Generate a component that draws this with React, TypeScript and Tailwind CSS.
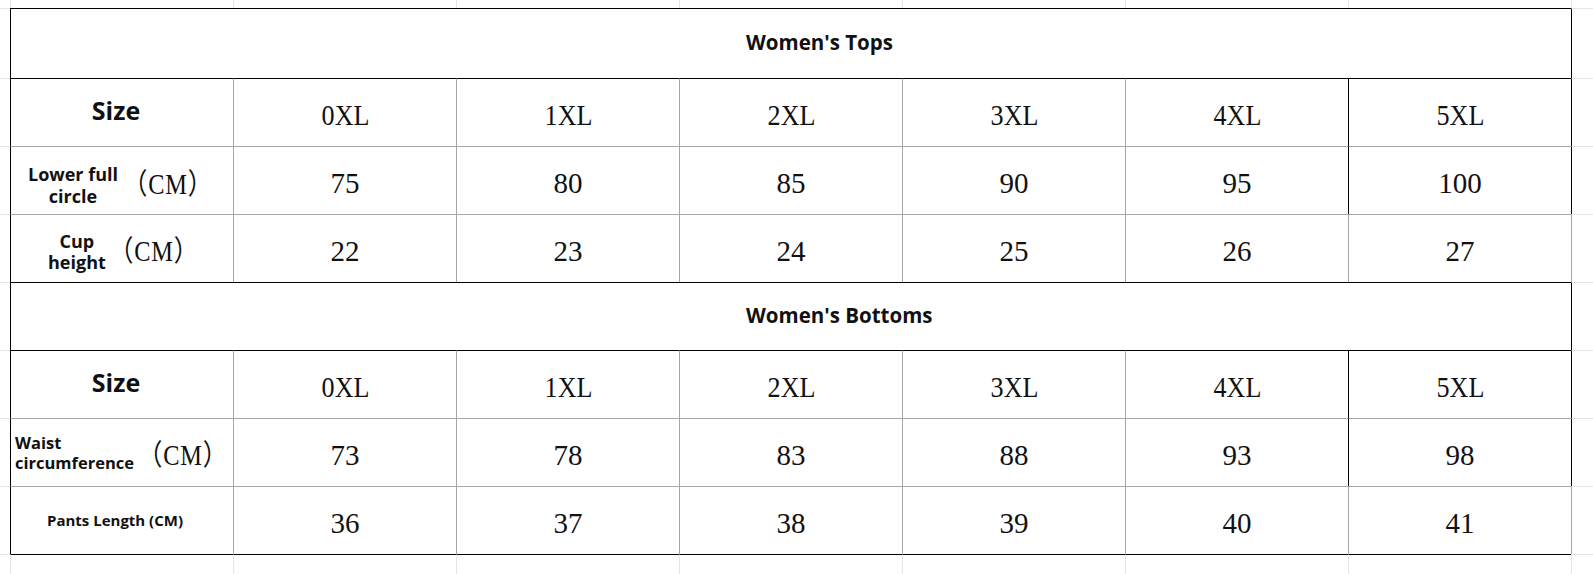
import React from "react";

type Tone = "black" | "gray" | "faint" | "none";

const TOP: Record<Tone, string> = {
  black: "border-t border-t-black",
  gray: "border-t border-t-[#a6a6a6]",
  faint: "border-t border-t-[#e6e6e6]",
  none: "",
};

const LEFT: Record<Tone, string> = {
  black: "border-l border-l-black",
  gray: "border-l border-l-[#a6a6a6]",
  faint: "border-l border-l-[#e6e6e6]",
  none: "",
};

const SANS = "font-['Open_Sans','Noto_Sans',sans-serif] font-bold text-[#111]";
const SERIF = "font-['Liberation_Serif','Noto_Sans_CJK_SC',serif] text-[#111]";

const sizes = ["0XL", "1XL", "2XL", "3XL", "4XL", "5XL"];

type RowSpec = {
  top: Tone;
  col6: Tone;
  right: Tone;
  label: React.ReactNode;
  values: React.ReactNode[];
  valueClass: string;
};

const Paren = ({ className }: { className: string }) => (
  <span
    className={`${SERIF} inline-block origin-left scale-x-[0.84] text-[29px] leading-none tracking-[1px] ${className}`}
  >
    （CM）
  </span>
);

const SizeHeader = (
  <div className={`${SANS} flex h-full items-center justify-center pb-[4px] pr-[12px] text-[25px] leading-none`}>
    Size
  </div>
);

const TableRow = ({ row }: { row: RowSpec }) => (
  <>
    <div className={TOP.faint} />
    <div className={`${TOP[row.top]} ${LEFT.black}`}>{row.label}</div>
    {row.values.map((v, i) => (
      <div
        key={i}
        className={`${TOP[row.top]} ${i === 5 ? LEFT[row.col6] : LEFT.gray} flex items-center justify-center ${SERIF} ${row.valueClass}`}
      >
        {v}
      </div>
    ))}
    <div className={`${TOP.faint} ${LEFT[row.right]}`} />
  </>
);

const TitleRow = ({ title }: { title: string }) => (
  <>
    <div className={TOP.faint} />
    <div
      className={`col-span-7 ${TOP.black} ${LEFT.black} flex items-center pb-[3px] pl-[735px] ${SANS} text-[20.5px]`}
    >
      {title}
    </div>
    <div className={`${TOP.faint} ${LEFT.black}`} />
  </>
);

const headerValues = sizes.map((s) => (
  <span key={s} className="inline-block scale-x-[0.87]">
    {s}
  </span>
));

const topsRows: RowSpec[] = [
  {
    top: "black",
    col6: "black",
    right: "black",
    label: SizeHeader,
    values: headerValues,
    valueClass: "pt-[5px] text-[30px] leading-none",
  },
  {
    top: "gray",
    col6: "black",
    right: "black",
    label: (
      <div className="flex h-full items-center pl-[17px] pt-[8px]">
        <div className={`${SANS} text-center text-[18px] leading-[22px]`}>
          Lower full
          <br />
          circle
        </div>
        <Paren className="ml-[5px]" />
      </div>
    ),
    values: ["75", "80", "85", "90", "95", "100"],
    valueClass: "pt-[6px] text-[29px] leading-none",
  },
  {
    top: "gray",
    col6: "gray",
    right: "gray",
    label: (
      <div className="flex h-full items-center pl-[37px] pt-[6px]">
        <div className={`${SANS} text-center text-[18px] leading-[21px]`}>
          Cup
          <br />
          height
        </div>
        <Paren className="ml-[3px]" />
      </div>
    ),
    values: ["22", "23", "24", "25", "26", "27"],
    valueClass: "pt-[6px] text-[29px] leading-none",
  },
];

const bottomsRows: RowSpec[] = [
  {
    top: "black",
    col6: "black",
    right: "black",
    label: SizeHeader,
    values: headerValues,
    valueClass: "pt-[5px] text-[30px] leading-none",
  },
  {
    top: "gray",
    col6: "black",
    right: "black",
    label: (
      <div className="flex h-full items-center pl-[4px]">
        <div className={`${SANS} text-left text-[16.5px] leading-[20px] text-[#1a1a2a]`}>
          Waist
          <br />
          circumference
        </div>
        <Paren className="ml-[4px] mt-[6px]" />
      </div>
    ),
    values: ["73", "78", "83", "88", "93", "98"],
    valueClass: "pt-[6px] text-[29px] leading-none",
  },
  {
    top: "gray",
    col6: "gray",
    right: "gray",
    label: (
      <div className={`${SANS} flex h-full items-center justify-center pr-[14px] text-[15px] text-[#1a1a2a]`}>
        Pants Length (CM)
      </div>
    ),
    values: ["36", "37", "38", "39", "40", "41"],
    valueClass: "pt-[6px] text-[29px] leading-none",
  },
];

export default function App() {
  return (
    <div className="grid h-[574px] w-[1593px] grid-cols-[10px_repeat(7,223px)_1fr] grid-rows-[8px_70px_repeat(7,68px)_1fr] overflow-hidden bg-white">
      {/* strip above the table */}
      <div />
      {Array.from({ length: 8 }).map((_, i) => (
        <div key={`t${i}`} className={LEFT.faint} />
      ))}

      <TitleRow title="Women's Tops" />
      {topsRows.map((r, i) => (
        <TableRow key={`a${i}`} row={r} />
      ))}

      <TitleRow title="Women's Bottoms" />
      {bottomsRows.map((r, i) => (
        <TableRow key={`b${i}`} row={r} />
      ))}

      {/* strip below the table */}
      <div className={TOP.faint} />
      {Array.from({ length: 7 }).map((_, i) => (
        <div key={`u${i}`} className={`${TOP.black} ${LEFT.faint}`} />
      ))}
      <div className={`${TOP.faint} ${LEFT.faint}`} />
    </div>
  );
}
